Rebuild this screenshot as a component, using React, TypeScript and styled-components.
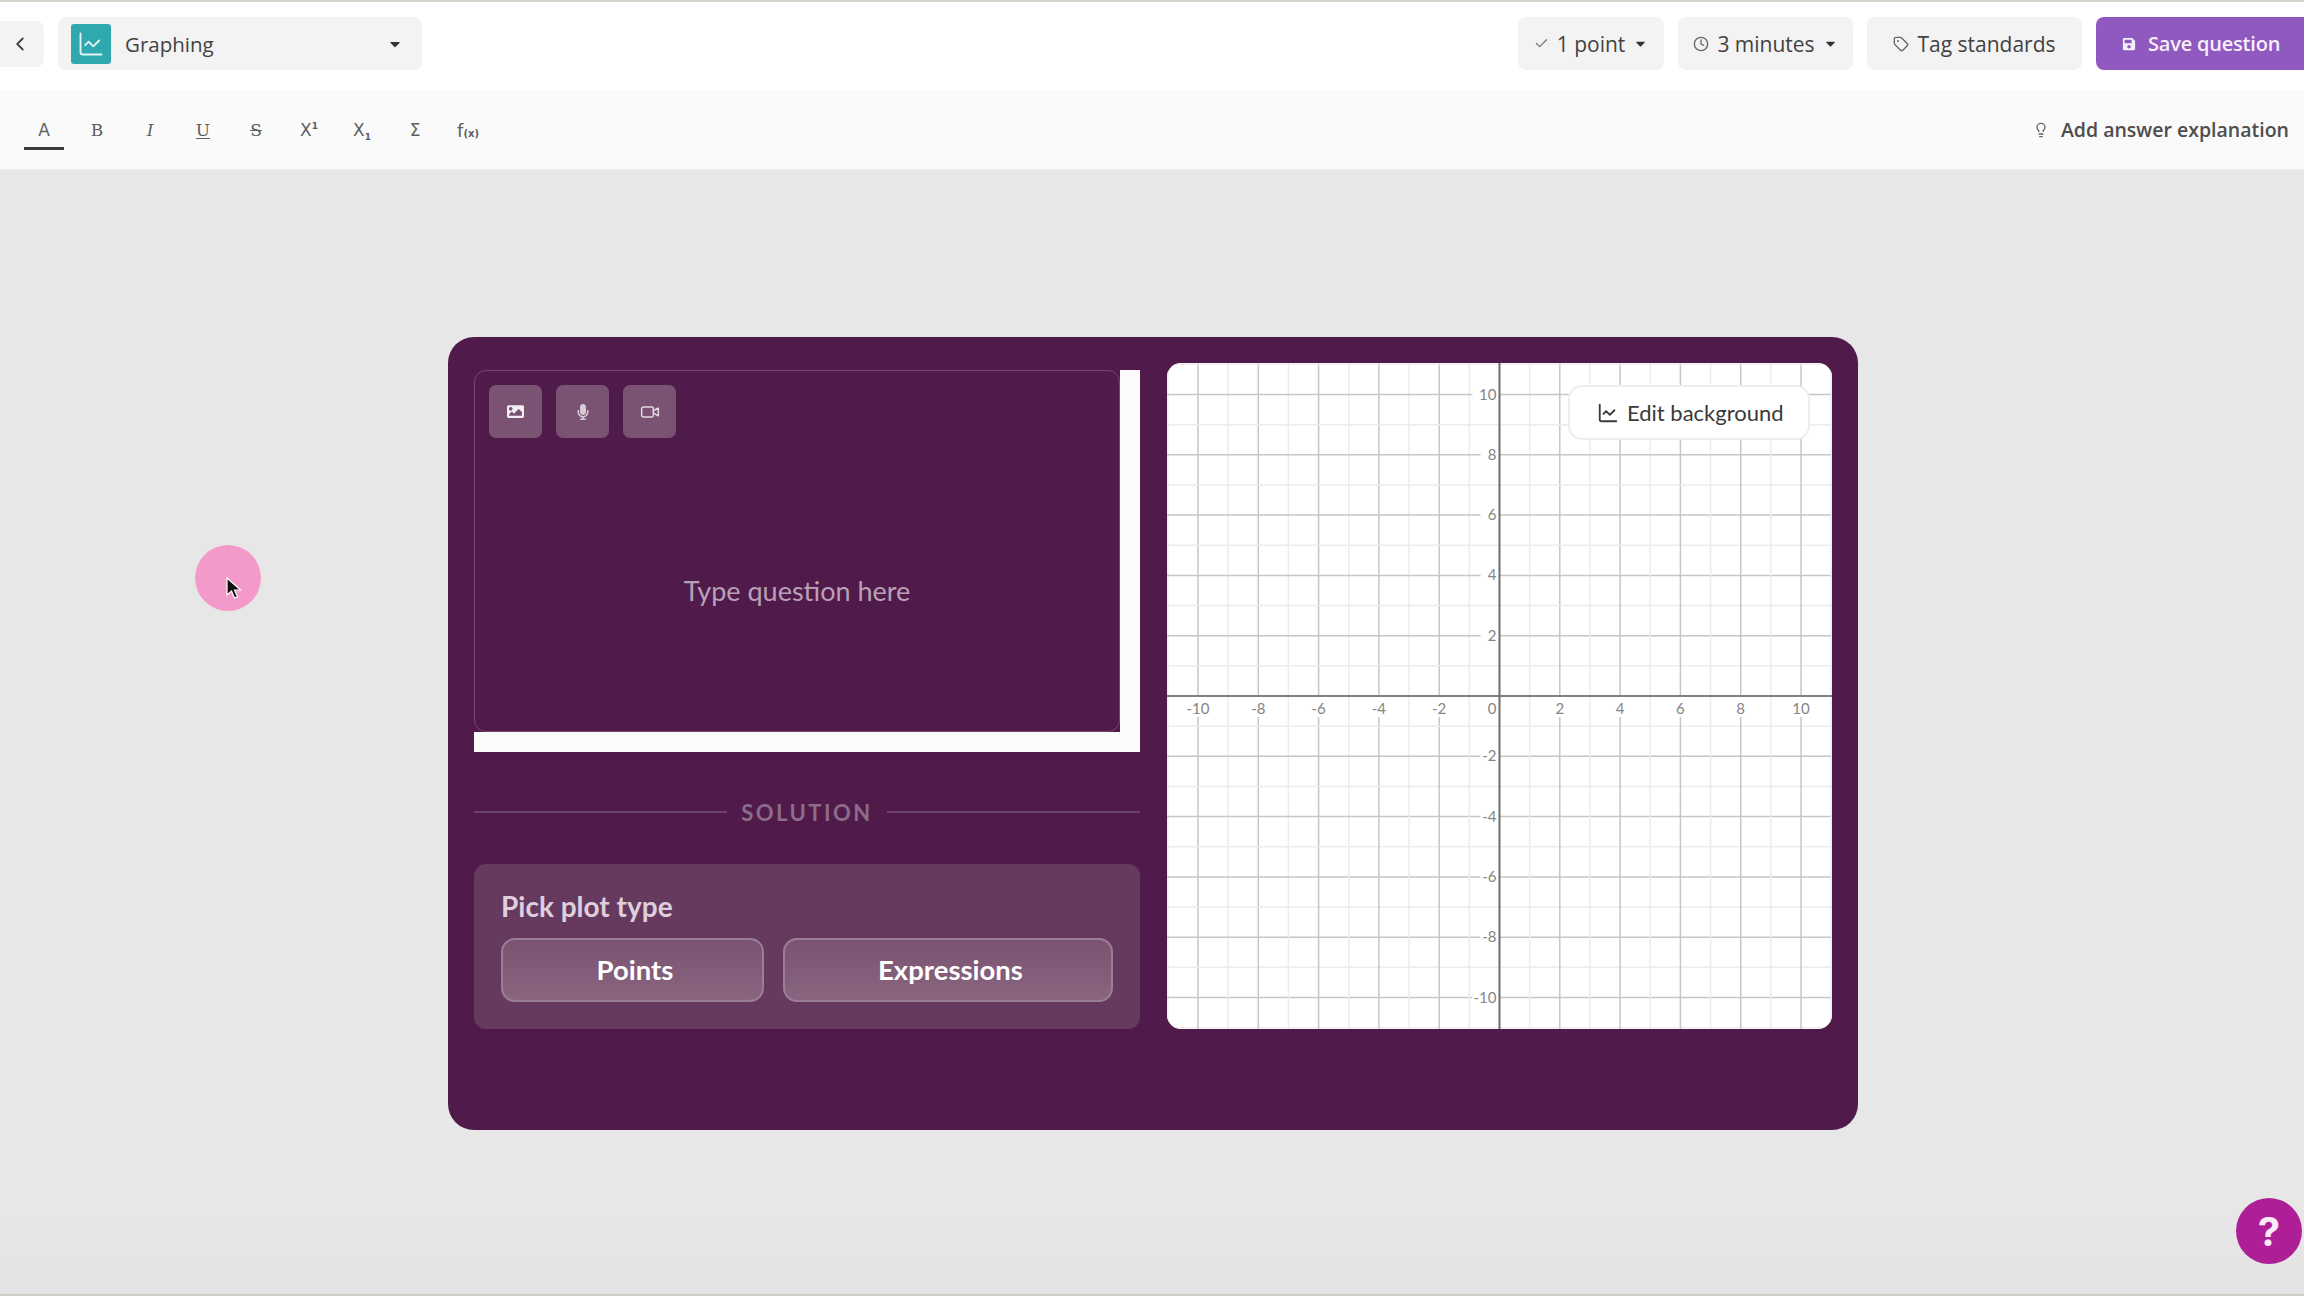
import React from 'react';
import styled, { createGlobalStyle } from 'styled-components';
import { Check, ChevronLeft, ChartLine, Clock, Lightbulb, Tag, Video } from 'lucide-react';
import { FaCaretDown, FaImage, FaMicrophone, FaSave } from 'react-icons/fa';

const GlobalStyle = createGlobalStyle`
  html, body {
    margin: 0;
    padding: 0;
    background: #e7e7e7;
  }
  * {
    box-sizing: border-box;
  }
`;

const uiFont = `'Open Sans', 'Noto Sans', sans-serif`;
const roundFont = `'Lato', 'Noto Sans', sans-serif`;

const Page = styled.div`
  position: relative;
  width: 2304px;
  height: 1296px;
  overflow: hidden;
  display: flex;
  flex-direction: column;
  font-family: ${uiFont};
  border-top: 2px solid #d6d5cd;
  border-bottom: 2px solid #d2ccc7;
  background: linear-gradient(to bottom, #e7e7e7 94%, #e3e3e3 100%);
`;

const Header = styled.header`
  height: 88px;
  flex: none;
  background: #fff;
  display: flex;
  align-items: center;
  justify-content: space-between;
  padding-bottom: 5px;
`;

const HeaderGroup = styled.div`
  display: flex;
  align-items: center;
  gap: 14px;
`;

const BackButton = styled.div`
  width: 44px;
  height: 46px;
  background: #f3f3f3;
  border-radius: 0 8px 8px 0;
  display: flex;
  align-items: center;
  justify-content: center;
  color: #444;
  padding-right: 4px;
`;

const TypeSelect = styled.div`
  width: 364px;
  height: 53px;
  background: #f3f3f3;
  border-radius: 8px;
  display: flex;
  align-items: center;
  padding: 0 19px 0 13px;
  font-size: 20.5px;
  font-weight: 500;
  color: #424242;
`;

const TypeIcon = styled.div`
  width: 40px;
  height: 40px;
  border-radius: 3px;
  background: #2fa8ae;
  color: #e4f5f5;
  display: flex;
  align-items: center;
  justify-content: center;
  margin-right: 14px;
`;

const TypeName = styled.span`
  flex: 1;
`;

const Pill = styled.div<{ $width: number }>`
  width: ${(p) => p.$width}px;
  height: 53px;
  background: #f3f3f3;
  border-radius: 8px;
  display: flex;
  align-items: center;
  justify-content: center;
  gap: 8px;
  font-size: 21px;
  font-weight: 500;
  color: #424242;
  white-space: nowrap;
  svg {
    flex: none;
  }
`;

const SaveButton = styled.div`
  width: 208px;
  height: 53px;
  background: #8f59bf;
  border-radius: 8px 0 0 8px;
  display: flex;
  align-items: center;
  gap: 12px;
  padding-left: 26px;
  font-size: 20px;
  font-weight: 600;
  letter-spacing: -0.2px;
  color: #f6eefa;
  white-space: nowrap;
`;

const Toolbar = styled.div`
  height: 80px;
  flex: none;
  background: #fafafa;
  border-bottom: 1px solid #efefef;
  display: flex;
  align-items: center;
  justify-content: space-between;
  padding: 0 15px 0 24px;
`;

const ToolGroup = styled.div`
  display: flex;
  gap: 13px;
`;

const Tool = styled.div<{ $active?: boolean }>`
  width: 40px;
  height: 38px;
  margin-top: 2px;
  display: flex;
  align-items: center;
  justify-content: center;
  padding-top: 2px;
  font-family: 'DejaVu Serif', serif;
  font-size: 17px;
  color: #5f5f5f;
  border-bottom: 3px solid ${(p) => (p.$active ? '#3c3c3c' : 'transparent')};
  sup, sub {
    font-size: 9px;
    font-weight: 700;
    line-height: 0;
  }
`;

const PlainGlyph = styled.span`
  font-family: 'DejaVu Sans', sans-serif;
`;

const ItalicGlyph = styled.span`
  font-style: italic;
`;

const UnderGlyph = styled.span`
  text-decoration: underline;
  text-underline-offset: 2px;
`;

const StrikeGlyph = styled.span`
  text-decoration: line-through;
`;

const FunctionGlyph = styled.span`
  font-family: 'DejaVu Sans', sans-serif;
  font-size: 18px;
`;

const SmallGlyph = styled.span`
  font-size: 10px;
  font-weight: 700;
`;

const Explanation = styled.div`
  display: flex;
  align-items: center;
  gap: 12px;
  font-size: 19.5px;
  font-weight: 600;
  color: #4d4d4d;
`;

const Canvas = styled.main`
  flex: 1;
  padding: 167px 0 0 448px;
`;

const Panel = styled.section`
  width: 1410px;
  height: 793px;
  background: #501b4a;
  border-radius: 26px;
  padding: 26px 26px 0 26px;
  display: grid;
  grid-template-columns: 666px 665px;
  column-gap: 27px;
  align-items: start;
`;

const LeftColumn = styled.div`
  padding-top: 7px;
`;

const QuestionFrame = styled.div`
  width: 666px;
  height: 382px;
  border-right: 20px solid #fbfbfb;
  border-bottom: 20px solid #fbfbfb;
`;

const QuestionBox = styled.div`
  width: 646px;
  height: 362px;
  background: #501b4a;
  border: 1px solid #74496e;
  border-radius: 12px;
  padding: 14px;
  display: flex;
  flex-direction: column;
`;

const MediaRow = styled.div`
  display: flex;
  gap: 14px;
`;

const MediaButton = styled.div`
  width: 53px;
  height: 53px;
  background: #7a5272;
  border-radius: 7px;
  color: #f4eef3;
  display: flex;
  align-items: center;
  justify-content: center;
`;

const Placeholder = styled.div`
  flex: 1;
  padding-top: 136px;
  text-align: center;
  font-family: ${roundFont};
  font-size: 27px;
  color: #b9a0b6;
`;

const Divider = styled.div`
  height: 30px;
  margin: 45px 0 37px;
  display: flex;
  align-items: center;
  gap: 14px;
  font-family: ${roundFont};
  font-size: 22px;
  font-weight: 700;
  letter-spacing: 2.5px;
  color: #8c6c88;
  &::before,
  &::after {
    content: '';
    flex: 1;
    height: 2px;
    background: #6c4266;
  }
`;

const PlotCard = styled.div`
  height: 165px;
  background: #66395f;
  border-radius: 12px;
  padding: 25px 27px 0 27px;
`;

const PlotTitle = styled.div`
  font-family: ${roundFont};
  font-size: 28px;
  font-weight: 700;
  line-height: 34px;
  color: #dfcfdc;
  margin-bottom: 15px;
`;

const PlotButtons = styled.div`
  display: grid;
  grid-template-columns: 263px 330px;
  column-gap: 19px;
`;

const PlotButton = styled.div`
  height: 64px;
  border: 2px solid #9a7e96;
  border-radius: 14px;
  background: linear-gradient(to bottom, #795370, #8a6580);
  display: flex;
  align-items: center;
  justify-content: center;
  padding: 0 0 2px 5px;
  font-family: ${roundFont};
  font-size: 27.5px;
  font-weight: 700;
  color: #fff;
`;

const GraphCard = styled.div`
  position: relative;
  width: 665px;
  height: 666px;
  background: #fff;
  border-radius: 14px;
  overflow: hidden;
  svg {
    display: block;
  }
`;

const EditButton = styled.div`
  position: absolute;
  top: 22px;
  right: 22px;
  width: 242px;
  height: 55px;
  background: #fff;
  border: 2px solid #eeeeee;
  border-radius: 14px;
  display: flex;
  align-items: center;
  gap: 8px;
  padding-left: 27px;
  font-family: ${roundFont};
  font-size: 22px;
  color: #3a3a3a;
  svg {
    display: block;
    flex: none;
  }
`;

const GraphLabel = styled.text`
  font-family: ${roundFont};
  font-size: 15px;
  fill: #858585;
`;

const CursorHalo = styled.div`
  position: absolute;
  left: 195px;
  top: 543px;
  width: 66px;
  height: 66px;
  border-radius: 50%;
  background: #f49aca;
`;

const CursorIcon = styled.svg`
  position: absolute;
  left: 31px;
  top: 32px;
`;

const HelpButton = styled.div`
  position: absolute;
  left: 2236px;
  top: 1196px;
  width: 66px;
  height: 66px;
  border-radius: 50%;
  background: #ae1f97;
  display: flex;
  align-items: center;
  justify-content: center;
  font-family: 'Inter', sans-serif;
  font-size: 40px;
  font-weight: 700;
  color: #fbeaf8;
`;

const UNIT = 30.15;
const CX = 332.5;
const CY = 333;
const steps = Array.from({ length: 23 }, (_, i) => i - 11);

const Graph = () => (
  <svg width="665" height="666" viewBox="0 0 665 666">
    {steps
      .filter((n) => n !== 0)
      .map((n) => {
        const major = n % 2 === 0;
        const color = major ? '#c6c6c6' : '#ececec';
        const x = CX + n * UNIT;
        const y = CY - n * UNIT;
        return (
          <g key={n}>
            {major ? (
              <>
                <line x1={x} y1={0} x2={x} y2={CY} stroke={color} strokeWidth={1.5} />
                <line x1={x} y1={CY + 21} x2={x} y2={666} stroke={color} strokeWidth={1.5} />
                <line x1={0} y1={y} x2={CX - (Math.abs(n) === 10 ? 27 : 19)} y2={y} stroke={color} strokeWidth={1.5} />
                <line x1={CX} y1={y} x2={665} y2={y} stroke={color} strokeWidth={1.5} />
              </>
            ) : (
              <>
                <line x1={x} y1={0} x2={x} y2={666} stroke={color} strokeWidth={1.5} />
                <line x1={0} y1={y} x2={665} y2={y} stroke={color} strokeWidth={1.5} />
              </>
            )}
          </g>
        );
      })}
    <line x1={0} y1={CY} x2={665} y2={CY} stroke="#808080" strokeWidth={2} />
    <line x1={CX} y1={0} x2={CX} y2={666} stroke="#6e6e6e" strokeWidth={2} />
    {steps
      .filter((n) => n % 2 === 0 && n !== 0)
      .map((n) => (
        <GraphLabel key={`x${n}`} x={CX + n * UNIT} y={CY + 18} textAnchor="middle">
          {n}
        </GraphLabel>
      ))}
    {steps
      .filter((n) => n % 2 === 0 && n !== 0)
      .map((n) => (
        <GraphLabel key={`y${n}`} x={CX - 3} y={CY - n * UNIT + 5} textAnchor="end">
          {n}
        </GraphLabel>
      ))}
    <GraphLabel x={CX - 3} y={CY + 18} textAnchor="end">
      0
    </GraphLabel>
  </svg>
);

const tools = [
  { key: 'a', active: true, node: <PlainGlyph>A</PlainGlyph> },
  { key: 'b', node: <span>B</span> },
  { key: 'i', node: <ItalicGlyph>I</ItalicGlyph> },
  { key: 'u', node: <UnderGlyph>U</UnderGlyph> },
  { key: 's', node: <StrikeGlyph>S</StrikeGlyph> },
  { key: 'sup', node: <PlainGlyph>X<sup>1</sup></PlainGlyph> },
  { key: 'sub', node: <PlainGlyph>X<sub>1</sub></PlainGlyph> },
  { key: 'sum', node: <PlainGlyph>Σ</PlainGlyph> },
  { key: 'fx', node: <FunctionGlyph>f<SmallGlyph>(x)</SmallGlyph></FunctionGlyph> },
];

const App = () => (
  <>
    <GlobalStyle />
    <Page>
      <Header>
        <HeaderGroup>
          <BackButton>
            <ChevronLeft size={22} strokeWidth={2} />
          </BackButton>
          <TypeSelect>
            <TypeIcon>
              <ChartLine size={28} strokeWidth={1.6} />
            </TypeIcon>
            <TypeName>Graphing</TypeName>
            <FaCaretDown size={16} color="#333" />
          </TypeSelect>
        </HeaderGroup>
        <HeaderGroup>
          <Pill $width={146}>
            <Check size={15} color="#777" />
            1 point
            <FaCaretDown size={15} color="#333" />
          </Pill>
          <Pill $width={175}>
            <Clock size={16} color="#666" />
            3 minutes
            <FaCaretDown size={15} color="#333" />
          </Pill>
          <Pill $width={215}>
            <Tag size={16} color="#666" />
            Tag standards
          </Pill>
          <SaveButton>
            <FaSave size={14} />
            Save question
          </SaveButton>
        </HeaderGroup>
      </Header>
      <Toolbar>
        <ToolGroup>
          {tools.map((t) => (
            <Tool key={t.key} $active={t.active}>
              {t.node}
            </Tool>
          ))}
        </ToolGroup>
        <Explanation>
          <Lightbulb size={16} color="#666" />
          Add answer explanation
        </Explanation>
      </Toolbar>
      <Canvas>
        <Panel>
          <LeftColumn>
            <QuestionFrame>
              <QuestionBox>
                <MediaRow>
                  <MediaButton>
                    <FaImage size={17} />
                  </MediaButton>
                  <MediaButton>
                    <FaMicrophone size={16} color="#d9cbd6" />
                  </MediaButton>
                  <MediaButton>
                    <Video size={20} strokeWidth={1.8} color="#e3d8e1" />
                  </MediaButton>
                </MediaRow>
                <Placeholder>Type question here</Placeholder>
              </QuestionBox>
            </QuestionFrame>
            <Divider>SOLUTION</Divider>
            <PlotCard>
              <PlotTitle>Pick plot type</PlotTitle>
              <PlotButtons>
                <PlotButton>Points</PlotButton>
                <PlotButton>Expressions</PlotButton>
              </PlotButtons>
            </PlotCard>
          </LeftColumn>
          <GraphCard>
            <Graph />
            <EditButton>
              <ChartLine size={22} strokeWidth={2} />
              Edit background
            </EditButton>
          </GraphCard>
        </Panel>
      </Canvas>
      <CursorHalo>
        <CursorIcon width="18" height="24" viewBox="0 0 18 24">
          <path d="M1 1 L1 18 L5.5 14 L8.5 21 L11.5 19.8 L8.5 13 L14.5 13 Z" fill="#111" stroke="#fff" strokeWidth="1.2" />
        </CursorIcon>
      </CursorHalo>
      <HelpButton>?</HelpButton>
    </Page>
  </>
);

export default App;
